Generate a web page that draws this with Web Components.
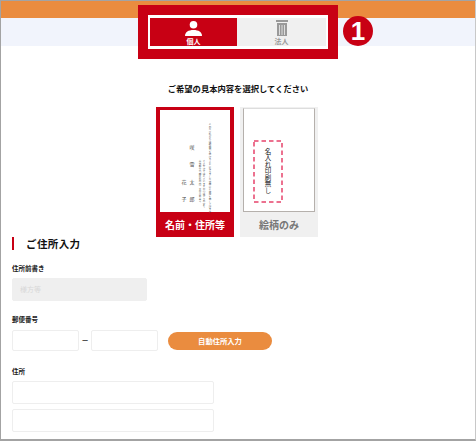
<!DOCTYPE html>
<html lang="ja">
<head>
<meta charset="utf-8">
<style>
  html, body { margin: 0; padding: 0; background: #fff; }
  body { font-family: "Noto Sans CJK JP", "Noto Sans", sans-serif; color: #111; }
</style>
</head>
<body>
<order-page>
  <site-banner></site-banner>
  <type-tabs></type-tabs>
  <sample-picker></sample-picker>
  <address-form></address-form>
</order-page>

<script>
const iconPerson = `<svg width="17" height="15" viewBox="0 0 17 15"><circle cx="8.500" cy="3.800" r="3.800" fill="#fff"/><path d="M0 15c0-4 3.400-6 8.500-6s8.500 2 8.500 6z" fill="#fff"/></svg>`;
const iconBuilding = `<svg width="12" height="16" viewBox="0 0 12 16"><path d="M0 0h12v2H0zM1 3h10v13H1z" fill="#999"/><path d="M3.500 5v10M6 5v10M8.500 5v10" stroke="#e4e4e4" stroke-width=".9"/></svg>`;

class OrderPage extends HTMLElement {
  constructor() {
    super();
    this.attachShadow({ mode: "open" });
    this.shadowRoot.innerHTML = `
      <style>
        :host{
          display:block;
          position:relative;
          box-sizing:border-box;
          width:476px;
          height:441px;
          overflow:hidden;
          border:1px solid #a3a3a3;
          border-right-color:#c8c8c8;
          border-bottom-width:2px;
          background:#fff;
        }
      </style>
      <slot></slot>
    `;
  }
}

class SiteBanner extends HTMLElement {
  constructor() {
    super();
    this.attachShadow({ mode: "open" });
    this.shadowRoot.innerHTML = `
      <style>
        :host{ display:block; }
        .orange{ height:17px; background:#ea8c3f; }
        .pale{ height:28px; background:#f1f4fc; }
      </style>
      <div class="orange"></div>
      <div class="pale"></div>
    `;
  }
}

// red highlight sits over the banner, so it is positioned
class TypeTabs extends HTMLElement {
  constructor() {
    super();
    this.attachShadow({ mode: "open" });
    this.shadowRoot.innerHTML = `
      <style>
        :host{
          display:block;
          position:absolute;
          left:137px;
          top:4px;
        }
        .mark{
          box-sizing:border-box;
          width:200px;
          height:54px;
          border:10px solid #c80014;
          background:#fff;
          padding:3px 2px;
          display:grid;
          grid-template-columns:87px 89px;
        }
        .tab{
          box-sizing:border-box;
          display:flex;
          flex-direction:column;
          align-items:center;
          justify-content:flex-end;
          height:28px;
          padding-bottom:1px;
          font-size:7px;
          line-height:8px;
          font-weight:700;
        }
        .on{ background:#c80014; color:#fff; }
        .off{ background:#f0f0f0; color:#999; }
        svg{ display:block; margin-bottom:1px; }
        .badge{
          position:absolute;
          left:205px;
          top:11px;
          width:30px;
          height:30px;
          border-radius:50%;
          background:#c80014;
          color:#fff;
          font:700 26px/30px "Liberation Sans", sans-serif;
          text-align:center;
        }
      </style>
      <div class="mark">
        <div class="tab on">${iconPerson}<span>個人</span></div>
        <div class="tab off">${iconBuilding}<span>法人</span></div>
      </div>
      <div class="badge">1</div>
    `;
  }
}

class SamplePicker extends HTMLElement {
  constructor() {
    super();
    this.attachShadow({ mode: "open" });
    this.shadowRoot.innerHTML = `
      <style>
        :host{ display:block; }
        h2{
          margin:35px 0 0;
          font-size:8.3px;
          line-height:14px;
          font-weight:700;
          text-align:center;
          color:#111;
        }
        .cards{
          display:flex;
          justify-content:center;
          gap:6px;
          margin-top:12px;
          padding-right:2px;
        }
      </style>
      <h2>ご希望の見本内容を選択してください</h2>
      <div class="cards">
        <sample-card selected label="名前・住所等"><proof-sheet></proof-sheet></sample-card>
        <sample-card label="絵柄のみ"><blank-note></blank-note></sample-card>
      </div>
    `;
  }
}

class SampleCard extends HTMLElement {
  constructor() {
    super();
    this.attachShadow({ mode: "open" });
    const on = this.hasAttribute("selected");
    this.shadowRoot.innerHTML = `
      <style>
        :host{
          display:block;
          box-sizing:border-box;
          width:78px;
          height:130px;
          padding:${on ? "3px 4px 0" : "1px 3px 0"};
          background:${on ? "#c80014" : "#f0f0f0"};
        }
        .paper{
          box-sizing:border-box;
          height:${on ? 102 : 104}px;
          background:#fff;
          ${on ? "" : "border:1px solid #b5b0ac;border-top-color:#ddd;"}
          display:flex;
          justify-content:center;
          align-items:center;
        }
        .label{
          height:25px;
          font-size:10px;
          line-height:25px;
          font-weight:700;
          text-align:center;
          color:${on ? "#fff" : "#777"};
          white-space:nowrap;
        }
      </style>
      <div class="paper"><slot></slot></div>
      <div class="label">${this.getAttribute("label")}</div>
    `;
  }
}

// the tiny vertical greeting card text
class ProofSheet extends HTMLElement {
  constructor() {
    super();
    this.attachShadow({ mode: "open" });
    this.shadowRoot.innerHTML = `
      <style>
        :host{
          display:flex;
          flex-direction:row-reverse;
          box-sizing:border-box;
          width:100%;
          height:100%;
          padding:13px 19px 0 0;
          color:#444;
        }
        .col{ writing-mode:vertical-rl; white-space:nowrap; }
        .tiny{ font-size:2.5px; line-height:3px; width:3px; color:#555; }
        .mid{ margin-top:37px; margin-left:0; margin-right:3px; }
        .names{
          display:flex;
          flex-direction:column;
          align-items:center;
          width:6px;
          font-size:5px;
          line-height:17.300px;
        }
        .names span{ height:17.300px; }
        .first{ margin-right:3px; margin-top:15px; }
        .second{ margin-right:2px; margin-top:49.600px; }
      </style>
      <div class="col tiny">このたび私たちは結婚式を挙げることになりました皆様にご挨拶を申し上げます</div>
      <div class="col tiny mid">ささやかではございますが心ばかりの宴を</div>
      <div class="col tiny" style="margin-top:37px;margin-right:1px">東京都千代田区丸の内一丁目二番三号</div>
      <div class="names first"><span>咲</span><span>雪</span><span>太</span><span>郎</span></div>
      <div class="names second"><span>花</span><span>子</span></div>
    `;
  }
}

// dashed box is drawn with svg so the dashes can be as long as in the sample
class BlankNote extends HTMLElement {
  constructor() {
    super();
    this.attachShadow({ mode: "open" });
    this.shadowRoot.innerHTML = `
      <style>
        :host{
          display:flex;
          align-items:center;
          justify-content:center;
          position:relative;
          width:30px;
          height:63px;
          margin:22px 22px 0 0;
        }
        svg{ position:absolute; left:0; top:0; }
        span{
          writing-mode:vertical-rl;
          font-size:6.500px;
          line-height:8px;
          color:#222;
          white-space:nowrap;
        }
      </style>
      <svg width="30" height="63"><rect x="1" y="1" width="28" height="61" fill="none" stroke="#e6436b" stroke-width="1.500" stroke-dasharray="4.500 3"/></svg>
      <span>名入れ印刷無し</span>
    `;
  }
}

class FormField extends HTMLElement {
  constructor() {
    super();
    this.attachShadow({ mode: "open" });
    const gap = this.getAttribute("gap") || 5;
    this.shadowRoot.innerHTML = `
      <style>
        :host{ display:block; }
        .name{
          font-size:6.500px;
          line-height:10px;
          font-weight:700;
          color:#222;
          margin-bottom:${gap}px;
        }
        .body{ display:flex; flex-direction:column; gap:5px; }
      </style>
      <div class="name">${this.getAttribute("label")}</div>
      <div class="body"><slot></slot></div>
    `;
  }
}

class TextBox extends HTMLElement {
  constructor() {
    super();
    this.attachShadow({ mode: "open" });
    const w = this.getAttribute("w") || 202;
    const h = this.getAttribute("h") || 23;
    const off = this.hasAttribute("disabled");
    this.shadowRoot.innerHTML = `
      <style>
        :host{
          display:block;
          box-sizing:border-box;
          width:${w}px;
          height:${h}px;
          border:1px solid ${off ? "#efefef" : "#eeeeee"};
          border-radius:2px;
          background:${off ? "#efefef" : "#fff"};
          padding:0 7px;
          font-size:7px;
          line-height:${h - 2}px;
          color:#d8d8d8;
        }
      </style>
      <slot></slot>
    `;
  }
}

class AddressForm extends HTMLElement {
  constructor() {
    super();
    this.attachShadow({ mode: "open" });
    this.shadowRoot.innerHTML = `
      <style>
        :host{
          display:block;
          padding:0 0 0 11px;
        }
        h3{
          margin:0;
          height:13px;
          border-left:2px solid #c80014;
          padding-left:12px;
          font-size:10.500px;
          line-height:13px;
          font-weight:700;
          letter-spacing:.4px;
          color:#111;
        }
        .pre{ margin-top:13px; }
        .zip{ margin-top:13px; }
        .addr{ margin-top:15px; }
        .row{ display:flex; align-items:center; }
        .dash{ width:12px; text-align:center; font-size:11px; line-height:21px; color:#222; }
        .auto{
          margin-left:10px;
          width:104px;
          height:18px;
          border-radius:9px;
          background:#ea8c3f;
          color:#fff;
          font-size:7.300px;
          line-height:18px;
          font-weight:700;
          text-align:center;
        }
      </style>
      <h3>ご住所入力</h3>
      <form-field class="pre" label="住所前書き">
        <text-box disabled w="135" h="23">様方等</text-box>
      </form-field>
      <form-field class="zip" label="郵便番号" gap="6">
        <div class="row">
          <text-box w="67" h="21"></text-box>
          <span class="dash">−</span>
          <text-box w="67" h="21"></text-box>
          <div class="auto">自動住所入力</div>
        </div>
      </form-field>
      <form-field class="addr" label="住所">
        <text-box></text-box>
        <text-box></text-box>
      </form-field>
    `;
  }
}

customElements.define("order-page", OrderPage);
customElements.define("site-banner", SiteBanner);
customElements.define("type-tabs", TypeTabs);
customElements.define("sample-card", SampleCard);
customElements.define("proof-sheet", ProofSheet);
customElements.define("blank-note", BlankNote);
customElements.define("sample-picker", SamplePicker);
customElements.define("form-field", FormField);
customElements.define("text-box", TextBox);
customElements.define("address-form", AddressForm);
</script>
</body>
</html>
